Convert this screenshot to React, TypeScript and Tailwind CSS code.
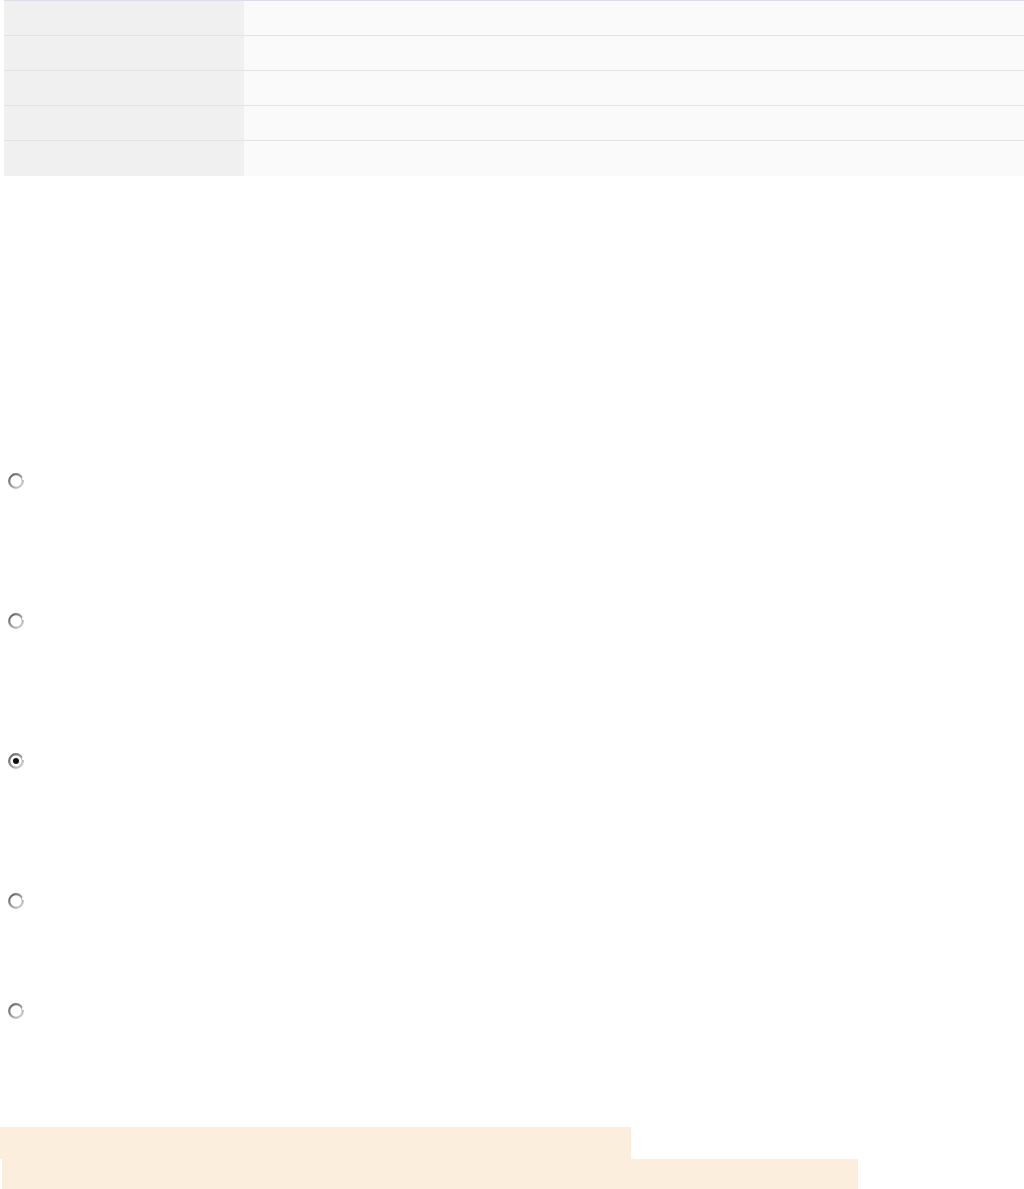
import React from 'react'

function Radio({ checked }: { checked?: boolean }) {
  const id = checked ? 'rg-on' : 'rg-off'
  return (
    <svg width="18" height="18" viewBox="0 0 18 18" className="block">
      <defs>
        <linearGradient id={id} x1="0" y1="0" x2="1" y2="1">
          <stop offset="0" stopColor="#5c5c5c" />
          <stop offset="0.5" stopColor="#9a9a9a" />
          <stop offset="1" stopColor="#dadada" />
        </linearGradient>
      </defs>
      <circle cx="9" cy="9" r="6.8" fill="#fff" stroke={`url(#${id})`} strokeWidth="2.2" />
      <rect x="15.2" y="5" width="3" height="3" fill="#fff" />
      {checked && <circle cx="9" cy="9" r="3" fill="#111" />}
    </svg>
  )
}

export default function App() {
  const rows = [0, 1, 2, 3, 4]
  const radios = [
    { checked: false, mt: 'mt-0' },
    { checked: false, mt: 'mt-[122px]' },
    { checked: true, mt: 'mt-[122px]' },
    { checked: false, mt: 'mt-[122px]' },
    { checked: false, mt: 'mt-[92px]' },
  ]

  return (
    <div className="min-h-[1189px] bg-white overflow-hidden font-['Liberation_Sans',sans-serif]">
      <div className="pl-1">
        <table className="w-[1020px] border-collapse">
          <tbody>
            {rows.map((r) => (
              <tr key={r} className={r === 0 ? 'border-t border-[#dcdee5]' : 'border-t border-[#e2e2e6]'}>
                <td className="w-[240px] h-[35px] bg-[#f0f0f0] p-0" />
                <td className="h-[35px] bg-[#fafafa] p-0" />
              </tr>
            ))}
          </tbody>
        </table>
      </div>

      <div className="mt-[296px] pl-[7px] flex flex-col">
        {radios.map((r, i) => (
          <div key={i} className={r.mt}>
            <Radio checked={r.checked} />
          </div>
        ))}
      </div>

      <div className="mt-[107px] flex flex-col">
        <div className="w-[631px] h-[32px] bg-[#fbeedc]" />
        <div className="ml-[2px] w-[856px] h-[30px] bg-[#fbeedc]" />
      </div>
    </div>
  )
}
